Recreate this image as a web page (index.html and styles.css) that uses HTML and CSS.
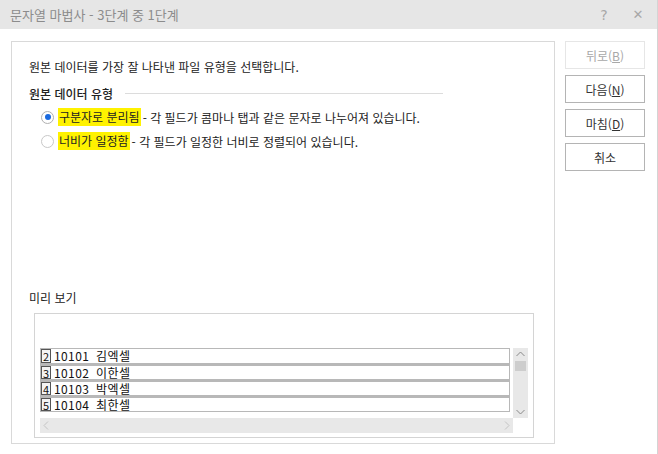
FILE: index.html
```html
<!DOCTYPE html>
<html lang="ko">
<head>
  <meta charset="UTF-8">
  <title>문자열 마법사 - 3단계 중 1단계</title>
  <link rel="stylesheet" href="styles.css">
</head>
<body>
  <div class="window">
    <!-- Title bar -->
    <div class="titlebar">
      <span class="title">문자열 마법사 - 3단계 중 1단계</span>
      <span class="tb-btn">?</span>
      <span class="tb-btn close">&#x2715;</span>
    </div>

    <div class="content">
      <!-- Main panel -->
      <div class="panel">
        <p class="intro">원본 데이터를 가장 잘 나타낸 파일 유형을 선택합니다.</p>

        <div class="group-title">
          <span>원본 데이터 유형</span>
          <span class="group-line"></span>
        </div>

        <div class="option">
          <span class="radio checked"></span>
          <span class="mark">구분자로 분리됨</span>
          <span>- 각 필드가 콤마나 탭과 같은 문자로 나누어져 있습니다.</span>
        </div>
        <div class="option">
          <span class="radio"></span>
          <span class="mark">너비가 일정함</span>
          <span>- 각 필드가 일정한 너비로 정렬되어 있습니다.</span>
        </div>

        <div class="preview-label">미리 보기</div>
        <div class="preview">
          <div class="preview-grid">
            <div class="rows">
              <div class="row"><span class="num">2</span>10101 김엑셀</div>
              <div class="row"><span class="num">3</span>10102 이한셀</div>
              <div class="row"><span class="num">4</span>10103 박엑셀</div>
              <div class="row"><span class="num">5</span>10104 최한셀</div>
            </div>
            <div class="vscroll">
              <svg width="15" height="12" viewBox="0 0 15 12"><path d="M3.5 8 L7.5 4 L11.5 8" fill="none" stroke="#8a8a8a" stroke-width="1"/></svg>
              <span class="thumb"></span>
              <span class="vspace"></span>
              <svg width="15" height="12" viewBox="0 0 15 12"><path d="M3.5 4 L7.5 8 L11.5 4" fill="none" stroke="#8a8a8a" stroke-width="1"/></svg>
            </div>
            <div class="hscroll">
              <svg width="12" height="15" viewBox="0 0 12 15"><path d="M8 3.5 L4 7.5 L8 11.5" fill="none" stroke="#c4c4c4" stroke-width="1"/></svg>
              <svg width="12" height="15" viewBox="0 0 12 15"><path d="M4 3.5 L8 7.5 L4 11.5" fill="none" stroke="#c4c4c4" stroke-width="1"/></svg>
            </div>
          </div>
        </div>
      </div>

      <!-- Buttons -->
      <div class="buttons">
        <button class="btn" disabled>뒤로(<u>B</u>)</button>
        <button class="btn">다음(<u>N</u>)</button>
        <button class="btn">마침(<u>D</u>)</button>
        <button class="btn">취소</button>
      </div>
    </div>
  </div>
</body>
</html>
```

FILE: styles.css
```css
body {
  margin: 0;
  font-family: "Noto Sans CJK KR", "Noto Sans", sans-serif;
  font-size: 12px;
  color: #222;
  background: #fff;
}

.window {
  width: 657px;
  height: 454px;
  border-right: 1px solid #d4d4d4;
  overflow: hidden;
}

.titlebar {
  height: 29px;
  background: #e6e6e6;
  display: flex;
  align-items: center;
  padding-left: 10px;
  color: #8c8c8c;
  font-size: 13px;
}

.title {
  flex: 1;
}

.tb-btn {
  width: 34px;
  text-align: center;
  color: #a8a8a8;
  font-family: "DejaVu Sans", sans-serif;
  font-size: 14px;
}

.tb-btn.close {
  font-size: 13px;
  margin-right: 2px;
}

.content {
  display: flex;
  padding: 12px 0 0 11px;
  gap: 10px;
}

.panel {
  width: 544px;
  height: 403px;
  border: 1px solid #d9d9d9;
  padding: 0 0 0 17px;
  box-sizing: border-box;
}

.intro {
  margin: 16px 0 0;
  line-height: 18px;
}

.group-title {
  display: flex;
  align-items: center;
  margin-top: 8px;
  height: 18px;
  font-weight: 500;
}

.group-line {
  width: 318px;
  height: 1px;
  background: #dcdcdc;
  margin-left: 12px;
}

.option {
  display: flex;
  align-items: center;
  height: 18px;
  margin-top: 6px;
  padding-left: 12px;
}

.radio {
  width: 13px;
  height: 13px;
  border: 1px solid #c8c8c8;
  border-radius: 50%;
  box-sizing: border-box;
  margin-right: 4px;
  position: relative;
}

.radio.checked {
  border-color: #b0b0b0;
}

.radio.checked::after {
  content: "";
  position: absolute;
  left: 2.5px;
  top: 2.5px;
  width: 6px;
  height: 6px;
  border-radius: 50%;
  background: #1a6ae0;
}

.mark {
  background: #fff200;
  height: 18px;
  line-height: 18px;
  padding: 0 1px;
  margin-right: 2px;
}

.preview-label {
  margin-top: 139px;
  line-height: 18px;
}

.preview {
  width: 500px;
  height: 125px;
  border: 1px solid #d4d4d4;
  margin: 6px 0 0 5px;
  padding: 34px 0 0 5px;
  box-sizing: border-box;
}

.preview-grid {
  display: grid;
  grid-template-columns: 473px 15px;
  grid-template-rows: 70px 15px;
}

.rows {
  width: 470px;
}

.row {
  height: 16px;
  border: 1px solid #b8b8b8;
  box-sizing: border-box;
  display: flex;
  align-items: center;
  font-family: "Noto Sans CJK KR", sans-serif;
  font-size: 12px;
  letter-spacing: 0.4px;
  word-spacing: 3px;
  color: #111;
  line-height: 12px;
  white-space: pre;
}

.row + .row {
  border-top-width: 2px;
}

.num {
  width: 10px;
  height: 14px;
  border: 1px solid #555;
  box-sizing: border-box;
  margin-right: 3px;
  font-size: 11px;
  letter-spacing: 0;
  text-align: center;
  line-height: 12px;
  background: #f4f4f4;
}

.row + .row .num {
  height: 13px;
}

.vscroll {
  background: #e8e8e8;
  display: flex;
  flex-direction: column;
  align-items: center;
}

.vscroll svg {
  flex: none;
}

.thumb {
  width: 11px;
  height: 10px;
  background: #cdcdcd;
  margin-top: 1px;
}

.vspace {
  flex: 1;
}

.hscroll {
  background: #e8e8e8;
  display: flex;
  justify-content: space-between;
  align-items: center;
}

.buttons {
  display: flex;
  flex-direction: column;
  gap: 6px;
}

.btn {
  width: 80px;
  height: 28px;
  background: #fff;
  border: 1px solid #b4b4b4;
  font-family: "Noto Sans CJK KR", sans-serif;
  font-size: 12px;
  color: #333;
  padding: 0;
}

.btn[disabled] {
  border-color: #e6e6e6;
  color: #a8a8a8;
}
```
